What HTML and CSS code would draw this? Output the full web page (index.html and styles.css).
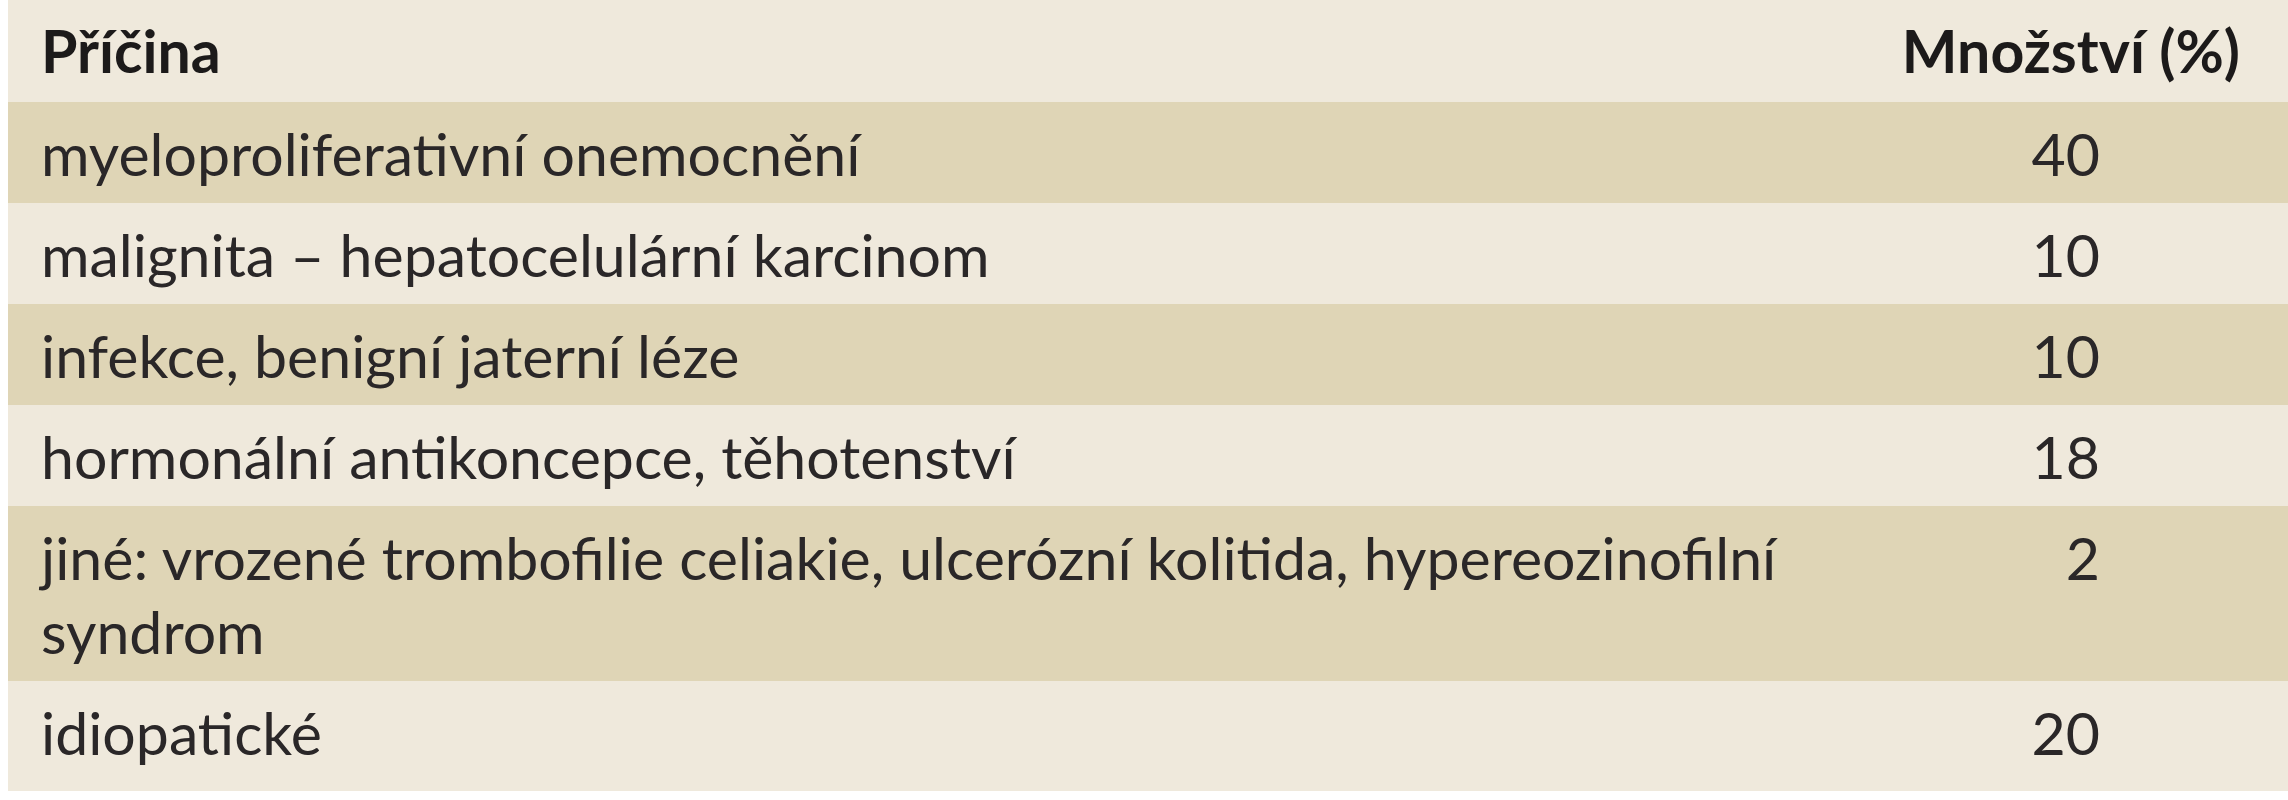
FILE: index.html
```html
<!DOCTYPE html>
<html lang="cs">
<head>
<meta charset="utf-8">
<title>Příčina</title>
<link rel="stylesheet" href="styles.css">
</head>
<body>
<table class="causes">
  <thead>
    <tr class="head">
      <th class="c-name">Příčina</th>
      <th class="c-val">Množství (%)</th>
    </tr>
  </thead>
  <tbody>
    <tr class="dark"><td class="c-name">myeloproliferativní onemocnění</td><td class="c-num">40</td></tr>
    <tr class="light"><td class="c-name">malignita – hepatocelulární karcinom</td><td class="c-num">10</td></tr>
    <tr class="dark"><td class="c-name">infekce, benigní jaterní léze</td><td class="c-num">10</td></tr>
    <tr class="light"><td class="c-name">hormonální antikoncepce, těhotenství</td><td class="c-num">18</td></tr>
    <tr class="dark"><td class="c-name">jiné: vrozené trombofilie celiakie, ulcerózní kolitida, hypereozinofilní syndrom</td><td class="c-num">2</td></tr>
    <tr class="light last"><td class="c-name">idiopatické</td><td class="c-num">20</td></tr>
  </tbody>
</table>
</body>
</html>
```
FILE: styles.css
```css
html, body {
  background: #ffffff;
}
body {
  margin: 0 0 0 8px;
  font-family: Lato, "Noto Sans", sans-serif;
}
.causes {
  width: 2280px;
  border-collapse: collapse;
  border-spacing: 0;
  font-size: 59px;
  line-height: 74px;
  color: #2a2728;
}
.causes th, .causes td {
  padding: 15px 0 12px 0;
  vertical-align: top;
}
.head {
  background: #efe9dc;
}
.head th {
  font-weight: 700;
  color: #1c1a1a;
  padding-top: 14px;
  padding-bottom: 14px;
}
.dark { background: #dfd5b6; }
.light { background: #efe9dc; }
.last td { padding-bottom: 21px; }
.c-name {
  text-align: left;
  padding-left: 33px !important;
  width: 1800px;
}
.c-val {
  text-align: right;
  padding-right: 48px !important;
  white-space: nowrap;
}
.c-num {
  text-align: right;
  padding-right: 188px !important;
}
```
